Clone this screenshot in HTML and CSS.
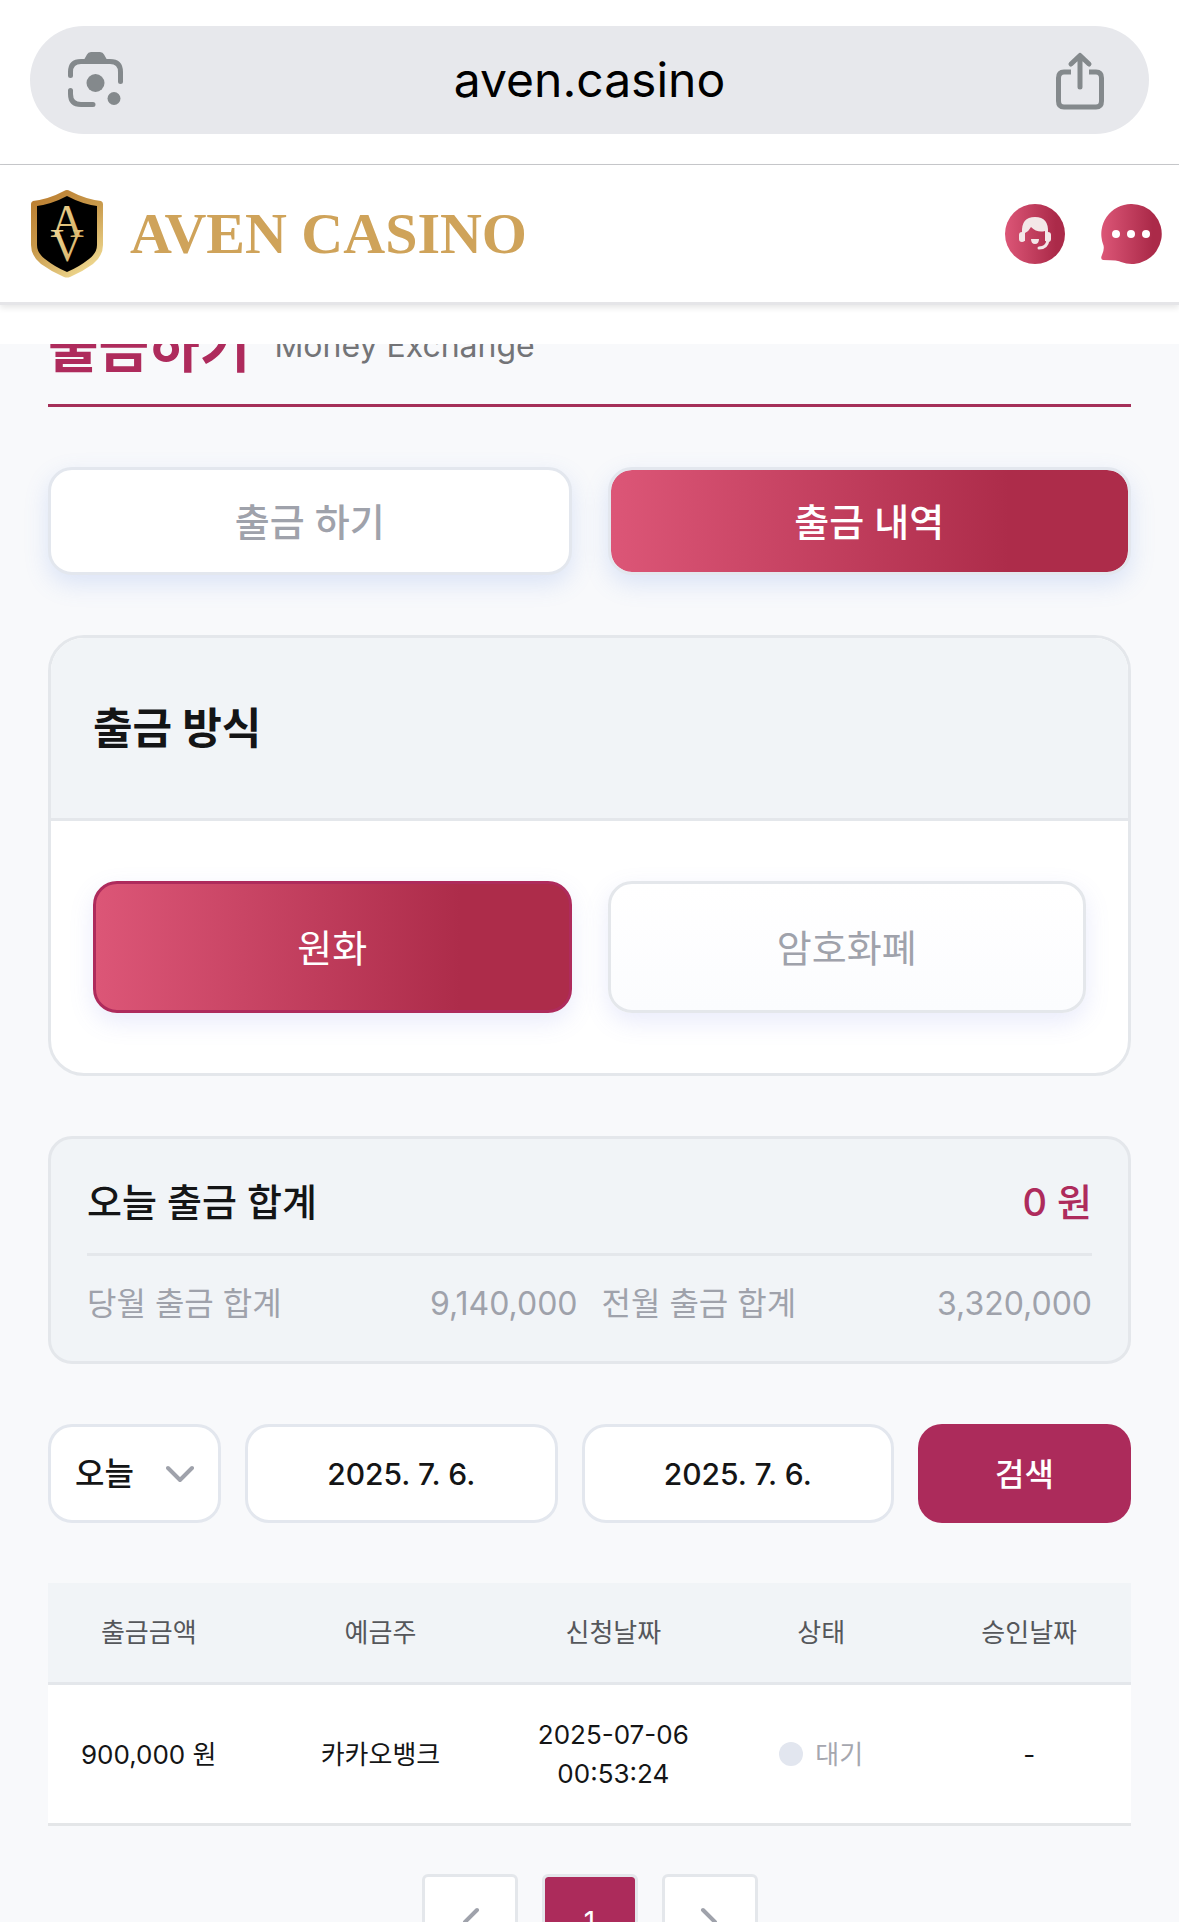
FILE: index.html
```html
<!DOCTYPE html>
<html lang="ko">
<head>
    <meta charset="UTF-8">
    <meta name="viewport" content="width=device-width, initial-scale=1.0">
    <title>AVEN CASINO</title>
    <link rel="stylesheet" href="styles.css">
</head>
<body>
    <div class="browser-bar">
        <div class="address">
            <button type="button" class="icon-btn" aria-label="Lens">
                <svg width="60" height="60" viewBox="66 50 60 60" fill="none" stroke="#84898c" stroke-width="5" stroke-linecap="round">
                    <path d="M70.500 75.500V72Q70.500 61.500 81 61.500H110Q120.500 61.500 120.500 72V81.500M70.500 90.500V94Q70.500 104.500 81 104.500H93"/>
                    <path d="M83 61.500L87 54.500Q88 52 91 52H100Q103 52 104 54.500L108 61.500Z" fill="#84898c" stroke="none"/>
                    <circle cx="95.500" cy="83" r="9" fill="#84898c" stroke="none"/>
                    <circle cx="114" cy="98.500" r="6.500" fill="#84898c" stroke="none"/>
                </svg>
            </button>
            <span class="url">aven.casino</span>
            <button type="button" class="icon-btn" aria-label="Share">
                <svg width="60" height="60" viewBox="1052 49 60 60" fill="none" stroke="#84898c" stroke-width="5" stroke-linecap="round" stroke-linejoin="round">
                    <path d="M1070 71H1063Q1057.500 71 1057.500 77V100Q1057.500 106 1063 106H1095Q1100.500 106 1100.500 100V77Q1100.500 71 1095 71H1088" stroke-linecap="butt"/>
                    <path d="M1079 86V55M1070 63L1079 54.500L1088 63"/>
                </svg>
            </button>
        </div>
    </div>

    <header class="site-header">
        <a href="/" class="brand">
            <svg width="74" height="90" viewBox="0 0 74 90">
                <defs>
                    <linearGradient id="gold" x1="0" y1="0" x2="0.600" y2="1">
                        <stop offset="0" stop-color="#b9792c"/>
                        <stop offset="0.550" stop-color="#c99b4d"/>
                        <stop offset="1" stop-color="#ecd48b"/>
                    </linearGradient>
                    <linearGradient id="gold2" x1="0" y1="0" x2="1" y2="1">
                        <stop offset="0" stop-color="#f3dfa0"/>
                        <stop offset="1" stop-color="#cfa557"/>
                    </linearGradient>
                </defs>
                <path d="M34 2Q37 0 40 2Q55 10 71 12Q73 13 73 15V56Q73 67 63 75Q52 83 40 88Q37 89 34 88Q22 83 11 75Q1 67 1 56V15Q1 13 3 12Q19 10 34 2Z" fill="url(#gold)"/>
                <path d="M37 7Q52 15 67 17V56Q67 64 59 70Q49 78 37 83Q25 78 15 70Q7 64 7 56V17Q22 15 37 7Z" fill="#000"/>
                <text x="37" y="48" class="mono" fill="url(#gold2)">A</text>
                <text x="37" y="72" class="mono" fill="url(#gold2)">V</text>
            </svg>
            <span class="brand-name">AVEN CASINO</span>
        </a>
        <nav class="header-links">
            <a href="#" aria-label="고객센터">
                <svg width="60" height="60" viewBox="0 0 60 60">
                    <defs>
                        <linearGradient id="rose" x1="0" y1="0" x2="1" y2="0">
                            <stop offset="0" stop-color="#dc5677"/>
                            <stop offset="0.850" stop-color="#ab2a49"/>
                        </linearGradient>
                    </defs>
                    <circle cx="30" cy="30" r="30" fill="url(#rose)"/>
                    <path d="M17 29Q16 13 30 13Q44 13 43 29V37H40V27Q32 29 26 23Q24 27 20 29V37H17Z" fill="#f3e7e8"/>
                    <rect x="14" y="28" width="6" height="10" rx="3" fill="#f3e7e8"/>
                    <rect x="40" y="28" width="6" height="10" rx="3" fill="#f3e7e8"/>
                    <path d="M26 35H34Q34 40 30 40Q26 40 26 35Z" fill="#f3e7e8"/>
                    <path d="M43 36Q42 44 34 44" fill="none" stroke="#f3e7e8" stroke-width="3" stroke-linecap="round"/>
                </svg>
            </a>
            <a href="#" aria-label="채팅">
                <svg width="60" height="60" viewBox="0 0 60 60">
                    <path d="M30 0A30 30 0 1 1 20 58Q18 56 2 56Q-1 55 1 51Q4 44 2 40A30 30 0 0 1 30 0Z" fill="url(#rose)"/>
                    <g fill="#fff"><circle cx="15" cy="30" r="4"/><circle cx="30" cy="30" r="4"/><circle cx="45" cy="30" r="4"/></g>
                </svg>
            </a>
        </nav>
    </header>

    <main class="content">
        <div class="page-title">
            <h1>출금하기</h1>
            <span>Money Exchange</span>
        </div>

        <div class="tabs">
            <button type="button" class="tab">출금 하기</button>
            <button type="button" class="tab active">출금 내역</button>
        </div>

        <section class="method">
            <h2>출금 방식</h2>
            <div class="method-list">
                <button type="button" class="method-btn active">원화</button>
                <button type="button" class="method-btn">암호화폐</button>
            </div>
        </section>

        <section class="summary">
            <div class="summary-today">
                <span>오늘 출금 합계</span>
                <strong>0 원</strong>
            </div>
            <div class="summary-months">
                <div><span>당월 출금 합계</span><span>9,140,000</span></div>
                <div><span>전월 출금 합계</span><span>3,320,000</span></div>
            </div>
        </section>

        <form class="filter">
            <div class="period">
                <select aria-label="기간">
                    <option>오늘</option>
                </select>
                <svg width="28" height="18" viewBox="0 0 28 18" fill="none" stroke="#9fa2ab" stroke-width="4" stroke-linecap="round" stroke-linejoin="round"><path d="M2 3L14 15L26 3"/></svg>
            </div>
            <input type="text" value="2025. 7. 6." aria-label="시작일">
            <input type="text" value="2025. 7. 6." aria-label="종료일">
            <button type="button">검색</button>
        </form>

        <table class="history">
            <thead>
                <tr>
                    <th class="col-amount">출금금액</th>
                    <th class="col-holder">예금주</th>
                    <th class="col-date">신청날짜</th>
                    <th class="col-status">상태</th>
                    <th>승인날짜</th>
                </tr>
            </thead>
            <tbody>
                <tr>
                    <td>900,000 원</td>
                    <td>카카오뱅크</td>
                    <td>2025-07-06<br>00:53:24</td>
                    <td><span class="status">대기</span></td>
                    <td>-</td>
                </tr>
            </tbody>
        </table>

        <nav class="pagination">
            <a href="#" aria-label="이전"><svg width="20" height="30" viewBox="0 0 20 30" fill="none" stroke="#9fa2ab" stroke-width="4" stroke-linecap="round" stroke-linejoin="round"><path d="M17 3L5 15L17 27"/></svg></a>
            <a href="#" class="current">1</a>
            <a href="#" aria-label="다음"><svg width="20" height="30" viewBox="0 0 20 30" fill="none" stroke="#9fa2ab" stroke-width="4" stroke-linecap="round" stroke-linejoin="round"><path d="M3 3L15 15L3 27"/></svg></a>
        </nav>
    </main>
</body>
</html>
```

FILE: styles.css
```css
* {
    box-sizing: border-box;
}
body {
    margin: 0;
    height: 100vh;
    overflow: hidden;
    display: flex;
    flex-direction: column;
    background: #fff;
    color: #141516;
    font-family: Inter, "Noto Sans CJK KR", sans-serif;
}
button, select, input {
    font-family: inherit;
    margin: 0;
}
button {
    padding: 0 0 4px;
    cursor: pointer;
}
a {
    color: inherit;
    text-decoration: none;
}
svg {
    display: block;
}

/* browser bar */
.browser-bar {
    flex: none;
    padding: 26px 30px 30px;
    border-bottom: 1px solid #c8c9cc;
}
.address {
    display: flex;
    align-items: center;
    justify-content: space-between;
    height: 108px;
    padding: 0 36px;
    border-radius: 54px;
    background: #e7e8ec;
}
.icon-btn {
    padding: 0;
    border: 0;
    background: none;
}
.url {
    color: #000;
    font-size: 48px;
    line-height: 60px;
}

/* site header */
.site-header {
    flex: none;
    display: flex;
    align-items: center;
    justify-content: space-between;
    height: 140px;
    padding: 0 18px 0 30px;
    border-bottom: 3px solid #e5e5e8;
    background: #fff;
    box-shadow: 0 3px 6px #00000018;
}
.brand {
    display: flex;
    align-items: center;
    gap: 26px;
}
.mono {
    font: 46px "Liberation Serif", serif;
    text-anchor: middle;
}
.brand-name {
    color: #cfa35a;
    font: bold 58px/70px "Liberation Serif", serif;
}
.header-links {
    display: flex;
    gap: 36px;
}
.header-links svg {
    overflow: visible;
}

.content {
    flex: none;
    margin-top: 39px;
    padding: 0 48px;
    background: #f8f9fb;
}

.page-title {
    display: flex;
    align-items: flex-end;
    gap: 24px;
    height: 63px;
    padding-bottom: 30px;
    overflow: hidden;
    border-bottom: 3px solid #a53059;
}
.page-title h1 {
    margin: 0;
    color: #ae2b5c;
    font-size: 55px;
    line-height: 54px;
}
.page-title span {
    color: #737477;
    font-size: 32px;
    line-height: 56px;
}

.tabs {
    display: grid;
    grid-template-columns: 1fr 1fr;
    gap: 36px;
    margin-top: 60px;
}
.tab {
    height: 108px;
    border: 3px solid #e3e7ee;
    border-radius: 24px;
    background: #fff;
    box-shadow: 0 9px 24px #5b84e62e;
    color: #9fa2ab;
    font-size: 38px;
    font-weight: 500;
}
.tab.active {
    background: linear-gradient(90deg, #dc5677, #ad2c4a 77%) padding-box;
    background-color: #eadfe7;
    color: #fff;
}

.method {
    margin-top: 60px;
    overflow: hidden;
    border: 3px solid #e4e7eb;
    border-radius: 36px;
    background: #fff;
}
.method h2 {
    margin: 0;
    padding: 60px 42px;
    border-bottom: 3px solid #e4e7eb;
    background: #f1f4f7;
    font-size: 43px;
    line-height: 60px;
}
.method-list {
    display: grid;
    grid-template-columns: 1fr 1fr;
    gap: 36px;
    padding: 60px 42px;
}
.method-btn {
    height: 132px;
    border: 3px solid #e4e7eb;
    border-radius: 24px;
    background: linear-gradient(#fff, #fbfcfe);
    box-shadow: 0 9px 24px #6b78e626;
    color: #9fa2ab;
    font-size: 38px;
}
.method-btn.active {
    border-color: #ae2b5c;
    background: linear-gradient(90deg, #dc5677, #ad2c4a 77%);
    color: #fff;
}

.summary {
    margin-top: 60px;
    padding: 0 36px;
    border: 3px solid #e4e7eb;
    border-radius: 24px;
    background: #f1f4f7;
}
.summary-today {
    display: flex;
    justify-content: space-between;
    align-items: center;
    height: 117px;
    padding-top: 12px;
    border-bottom: 3px solid #e4e7eb;
    font-size: 38px;
    line-height: 54px;
    font-weight: 500;
}
.summary-today strong {
    color: #ae2b5c;
    font-weight: 500;
}
.summary-months {
    display: grid;
    grid-template-columns: 1fr 1fr;
    gap: 24px;
    padding: 24px 0 33px;
    color: #9fa2ab;
    font-size: 32px;
    line-height: 48px;
}
.summary-months div {
    display: flex;
    justify-content: space-between;
}

.filter {
    display: grid;
    grid-template-columns: 173px 1fr 1fr 213px;
    gap: 24px;
    margin-top: 60px;
}
.filter select, .filter input, .filter button {
    width: 100%;
    height: 99px;
    border: 3px solid #e3e7ee;
    border-radius: 24px;
    background: #fff;
    color: #141516;
    font-size: 32px;
}
.filter input {
    padding: 0;
    font-size: 30px;
    font-weight: 500;
    text-align: center;
}
.filter button {
    border: 0;
    background: #ac2b5b;
    color: #fff;
    font-weight: 500;
}
.period {
    display: grid;
    align-items: center;
}
.period select {
    grid-area: 1 / 1;
    padding: 0 24px;
    appearance: none;
    font-weight: 500;
}
.period svg {
    grid-area: 1 / 1;
    justify-self: end;
    margin-right: 27px;
    pointer-events: none;
}

.history {
    width: 100%;
    margin-top: 60px;
    border-collapse: collapse;
    table-layout: fixed;
    background: #fff;
    font-size: 26px;
    line-height: 39px;
    text-align: center;
}
.history th {
    padding: 30px 0;
    border-bottom: 3px solid #e4e7eb;
    background: #f1f4f7;
    color: #55575b;
    font-weight: 400;
}
.history td {
    padding: 30px 0;
    border-bottom: 3px solid #e4e6e8;
}
.col-amount {
    width: 18.6%;
}
.col-holder {
    width: 24.2%;
}
.col-date {
    width: 18.8%;
}
.col-status {
    width: 19.6%;
}
.status {
    display: flex;
    align-items: center;
    justify-content: center;
    gap: 12px;
    color: #a5a7af;
}
.status::before {
    content: "";
    width: 24px;
    height: 24px;
    border-radius: 50%;
    background: #e2e6ef;
}

.pagination {
    display: flex;
    justify-content: center;
    gap: 24px;
    margin-top: 48px;
}
.pagination a {
    display: flex;
    align-items: center;
    justify-content: center;
    width: 96px;
    height: 96px;
    border: 3px solid #e4e7eb;
    border-radius: 6px;
    background: #fff;
    font-size: 28px;
}
.pagination .current {
    background: #ac2b5b;
    background-clip: padding-box;
    color: #fff;
}
```
